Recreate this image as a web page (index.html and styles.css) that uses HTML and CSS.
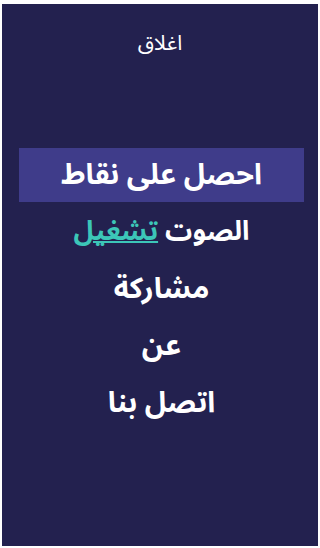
FILE: index.html
```html
<!DOCTYPE html>
<html lang="ar" dir="rtl">
<head>
<meta charset="utf-8">
<link rel="stylesheet" href="styles.css">
</head>
<body>
<div class="panel">
  <div class="close">اغلاق</div>
  <nav class="menu">
    <div class="item active">احصل على نقاط</div>
    <div class="item sound">الصوت <span class="on">تشغيل</span></div>
    <div class="item">مشاركة</div>
    <div class="item">عن</div>
    <div class="item">اتصل بنا</div>
  </nav>
</div>
</body>
</html>
```
FILE: styles.css
```css
html, body {
  margin: 0;
  padding: 0;
  background: #ffffff;
}
body {
  padding: 4px 2px 2px 2px;
  font-family: "Noto Sans Arabic", "Noto Sans Arabic UI", "Noto Kufi Arabic", "DejaVu Sans", sans-serif;
}
.panel {
  height: 542px;
  background: #23214f;
  color: #ffffff;
  display: flex;
  flex-direction: column;
  align-items: stretch;
}
.close {
  text-align: center;
  font-size: 21px;
  line-height: 24px;
  margin-top: 27px;
}
.menu {
  margin-top: 93px;
  display: flex;
  flex-direction: column;
  padding: 0 14px 0 17px;
  gap: 3px;
}
.item {
  text-align: center;
  font-size: 29px;
  font-weight: bold;
  line-height: 54px;
  height: 54px;
}
.sound {
  font-size: 27px;
}
.active {
  background: #3f3c8a;
}
.on {
  color: #3cc6b8;
  text-decoration: underline;
  text-decoration-thickness: 2px;
}
```
